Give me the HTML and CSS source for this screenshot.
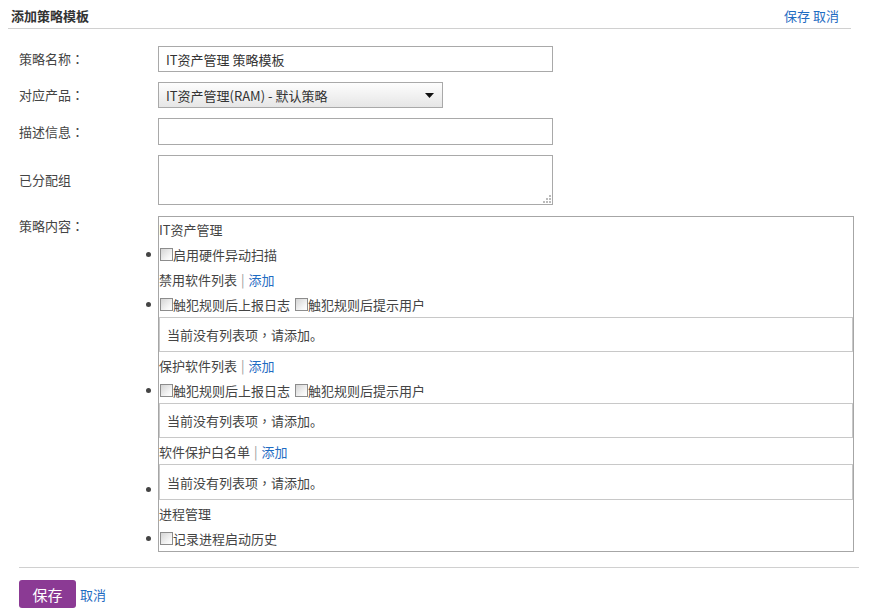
FILE: index.html
```html
<!DOCTYPE html>
<html lang="zh-CN">
<head>
<meta charset="utf-8">
<title>添加策略模板</title>
<link rel="stylesheet" href="styles.css">
</head>
<body>
<div class="page">
  <div class="header">
    <span class="title">添加策略模板</span>
    <span class="actions"><a href="#">保存</a> <a href="#">取消</a></span>
  </div>

  <div class="form">
    <div class="row">
      <label class="label">策略名称<span class="punct" lang="zh-TW">：</span></label>
      <input class="text" type="text" value="IT资产管理 策略模板">
    </div>
    <div class="row">
      <label class="label">对应产品<span class="punct" lang="zh-TW">：</span></label>
      <div class="select">
        <span>IT资产管理(RAM) - 默认策略</span>
        <svg class="arrow" width="9" height="5" viewBox="0 0 9 5"><path d="M0 0H9L4.5 5Z" fill="#111"/></svg>
      </div>
    </div>
    <div class="row">
      <label class="label">描述信息<span class="punct" lang="zh-TW">：</span></label>
      <input class="text desc" type="text" value="">
    </div>
    <div class="row">
      <label class="label">已分配组</label>
      <div class="area-wrap">
        <textarea class="area"></textarea>
        <svg class="grip" width="10" height="10" viewBox="0 0 10 10">
          <rect x="7" y="1" width="2" height="2" fill="#bbb"/>
          <rect x="4" y="4" width="2" height="2" fill="#bbb"/>
          <rect x="7" y="4" width="2" height="2" fill="#bbb"/>
          <rect x="1" y="7" width="2" height="2" fill="#bbb"/>
          <rect x="4" y="7" width="2" height="2" fill="#bbb"/>
          <rect x="7" y="7" width="2" height="2" fill="#bbb"/>
        </svg>
      </div>
    </div>
    <div class="row top">
      <label class="label">策略内容<span class="punct" lang="zh-TW">：</span></label>
      <div class="policy">
        <div class="line">IT资产管理</div>
        <ul class="items">
          <li class="line bullet"><input class="cb" type="checkbox">启用硬件异动扫描</li>
        </ul>
        <div class="line">禁用软件列表<span class="sep">|</span><a href="#">添加</a></div>
        <ul class="items">
          <li class="line bullet"><input class="cb" type="checkbox">触犯规则后上报日志<input class="cb next" type="checkbox">触犯规则后提示用户</li>
        </ul>
        <div class="empty">当前没有列表项<span class="punct" lang="zh-TW">，</span>请添加。</div>
        <div class="line">保护软件列表<span class="sep">|</span><a href="#">添加</a></div>
        <ul class="items">
          <li class="line bullet"><input class="cb" type="checkbox">触犯规则后上报日志<input class="cb next" type="checkbox">触犯规则后提示用户</li>
        </ul>
        <div class="empty">当前没有列表项<span class="punct" lang="zh-TW">，</span>请添加。</div>
        <div class="line">软件保护白名单<span class="sep">|</span><a href="#">添加</a></div>
        <ul class="items">
          <li class="bullet box-item"><div class="empty tall">当前没有列表项<span class="punct" lang="zh-TW">，</span>请添加。</div></li>
        </ul>
        <div class="line">进程管理</div>
        <ul class="items">
          <li class="line bullet"><input class="cb" type="checkbox">记录进程启动历史</li>
        </ul>
      </div>
    </div>
  </div>

  <div class="footer">
    <button class="btn" type="button">保存</button>
    <a href="#" class="cancel">取消</a>
  </div>
</div>
</body>
</html>
```

FILE: styles.css
```css
* { box-sizing: border-box; }

html, body {
  margin: 0;
  padding: 0;
  background: #fff;
}

body {
  font-family: "Noto Sans CJK SC", "Microsoft YaHei", "Noto Sans", sans-serif;
  font-size: 13px;
  color: #444;
}

a {
  color: #1f6cc2;
  text-decoration: none;
}

.punct {
  font-family: "Noto Sans CJK TC", "Noto Sans CJK SC", sans-serif;
}

.page {
  width: 873px;
  padding-left: 8px;
}

.header {
  display: flex;
  justify-content: space-between;
  align-items: center;
  width: 843px;
  height: 29px;
  padding: 2px 12px 0 3px;
  border-bottom: 1px solid #d0d0d0;
}

.title {
  font-weight: bold;
  color: #333;
}

.form {
  display: flex;
  flex-direction: column;
  gap: 10px;
  margin-top: 17px;
  padding-left: 11px;
}

.row {
  display: grid;
  grid-template-columns: 139px auto;
  align-items: center;
}

.row.top {
  align-items: start;
  margin-top: 1px;
}

.label {
  line-height: 20px;
  color: #444;
}

.text {
  width: 395px;
  height: 26px;
  margin: 0;
  padding: 0 7px;
  border: 1px solid #a9a9a9;
  font: inherit;
  color: #333;
  background: #fff;
  outline: none;
}

.text.desc { height: 27px; }

.select {
  display: flex;
  justify-content: space-between;
  align-items: center;
  width: 285px;
  height: 26px;
  padding: 0 8px 0 7px;
  border: 1px solid #a9a9a9;
  background: linear-gradient(#fdfdfd, #e6e6e6);
  color: #333;
}

.arrow { display: block; }

.area-wrap {
  position: relative;
  width: 395px;
  height: 50px;
}

.area {
  display: block;
  width: 395px;
  height: 50px;
  margin: 0;
  border: 1px solid #a9a9a9;
  resize: none;
  font: inherit;
  outline: none;
}

.grip {
  position: absolute;
  right: 1px;
  bottom: 1px;
}

.policy {
  width: 696px;
  border: 1px solid #a6a6a6;
  color: #444;
}

.items {
  list-style: none;
  margin: 0;
  padding: 0;
}

.line {
  display: flex;
  align-items: center;
  height: 25px;
  white-space: nowrap;
}

.bullet { position: relative; }

.bullet::before {
  content: "";
  position: absolute;
  left: -13px;
  top: 10px;
  width: 5px;
  height: 5px;
  border-radius: 50%;
  background: #444;
}

.box-item::before { top: 23px; }

.sep {
  color: #999;
  margin: 0 4px;
}

.cb {
  appearance: none;
  -webkit-appearance: none;
  flex: none;
  width: 13px;
  height: 13px;
  margin: 0 0 1px 1px;
  border: 1px solid #8c8c8c;
  border-radius: 0;
  background: linear-gradient(135deg, #d4d4d4, #f6f6f6 70%, #fff);
}

.cb.next { margin-left: 5px; }

.empty {
  display: flex;
  align-items: center;
  height: 35px;
  margin-bottom: 1px;
  padding-left: 7px;
  border: 1px solid #c8c8c8;
  color: #444;
}

.empty.tall { height: 36px; }

.footer {
  display: flex;
  align-items: center;
  gap: 4px;
  width: 840px;
  margin: 15px 0 0 11px;
  padding-top: 11px;
  border-top: 1px solid #d0d0d0;
}

.btn {
  width: 57px;
  height: 28px;
  padding: 0;
  border: none;
  border-radius: 3px;
  background: #8b3a94;
  color: #fff;
  font: inherit;
  font-size: 15px;
}

.cancel {
  line-height: 28px;
  margin-top: 2px;
}
```
